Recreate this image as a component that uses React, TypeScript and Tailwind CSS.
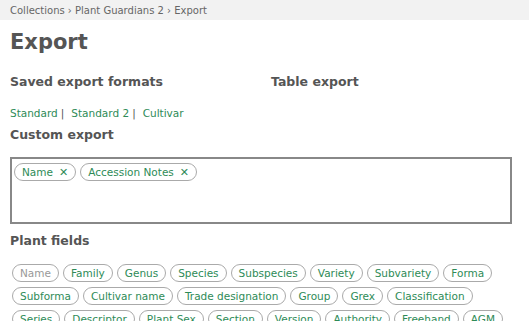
const plantFields = [
  'Name', 'Family', 'Genus', 'Species', 'Subspecies', 'Variety', 'Subvariety', 'Forma',
  'Subforma', 'Cultivar name', 'Trade designation', 'Group', 'Grex', 'Classification',
  'Series', 'Descriptor', 'Plant Sex', 'Section', 'Version', 'Authority', 'Freehand', 'AGM'
]

const selected = ['Name', 'Accession Notes']

function Chip({ label, muted, removable }: { label: string; muted?: boolean; removable?: boolean }) {
  return (
    <span
      className={`inline-flex items-center h-[18px] px-[7px] rounded-full border border-[#aaaaaa] text-[10.5px] leading-none ${
        muted ? 'text-[#999999]' : 'text-[#2e8b57]'
      }`}
    >
      {label}
      {removable && <span className="ml-[6px] text-[11px]">✕</span>}
    </span>
  )
}

export default function App() {
  return (
    <div className="w-[529px] h-[321px] overflow-hidden bg-white text-[#555555] font-['DejaVu_Sans',sans-serif]">
      <div className="h-[20px] bg-[#f2f2f2] px-[10px] flex items-center text-[10px] text-[#666666]">
        Collections › Plant Guardians 2 › Export
      </div>

      <div className="px-[10px]">
        <h1 className="mt-[9px] text-[21px] font-bold leading-[26px]">Export</h1>

        <div className="flex mt-[19px]">
          <div className="w-[261px]">
            <h2 className="text-[12.5px] font-bold leading-[16px]">Saved export formats</h2>
            <div className="mt-[16px] text-[10.5px] text-[#2e8b57] leading-[14px] flex">
              <span>Standard</span>
              <span className="ml-[3px] mr-[7px] text-[#555555]">|</span>
              <span>Standard 2</span>
              <span className="ml-[3px] mr-[7px] text-[#555555]">|</span>
              <span>Cultivar</span>
            </div>
          </div>
          <h2 className="text-[12.5px] font-bold leading-[16px]">Table export</h2>
        </div>

        <h2 className="mt-[7px] text-[12.5px] font-bold leading-[16px]">Custom export</h2>

        <div className="mt-[14px] w-[502px] h-[67px] border-2 border-[#888888] pt-[4px] px-[2px] flex flex-wrap content-start gap-[4px]">
          {selected.map((s) => (
            <Chip key={s} label={s} removable />
          ))}
        </div>

        <h2 className="mt-[9px] text-[12.5px] font-bold leading-[16px]">Plant fields</h2>

        <div className="mt-[15px] pl-[2px] w-[500px] flex flex-wrap gap-x-[4px] gap-y-[5px]">
          {plantFields.map((f, i) => (
            <Chip key={f} label={f} muted={i === 0} />
          ))}
        </div>
      </div>
    </div>
  )
}
